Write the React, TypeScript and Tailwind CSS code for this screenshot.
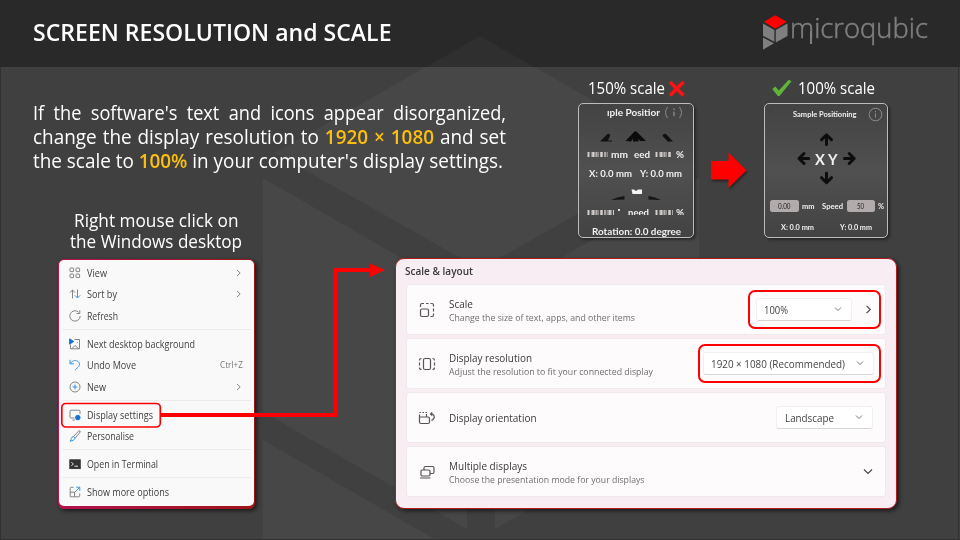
import React, { useLayoutEffect, useRef } from "react";

type FitProps = { w: number; className?: string; children: React.ReactNode };

/** One line of text set to a fixed measure: the glyphs are condensed or widened to fill it. */
function Fit({ w, className = "", children }: FitProps) {
  const ref = useRef<HTMLSpanElement>(null);
  useLayoutEffect(() => {
    const el = ref.current;
    if (el && el.offsetWidth) {
      el.style.transform = "none";
      const natural = el.getBoundingClientRect().width;
      el.style.transform = `scaleX(${w / natural})`;
    }
  }, [w]);
  return (
    <span className={`block shrink-0 whitespace-nowrap ${className}`} style={{ width: w }}>
      <span ref={ref} className="inline-block origin-left align-top">
        {children}
      </span>
    </span>
  );
}

function Backdrop() {
  return (
    <svg className="absolute inset-0" width="960" height="540" viewBox="0 0 960 540">
      <rect width="960" height="540" fill="#404040" />
      <g fill="#474747">
        <path d="M480 36 685 153 480 269 275 153Z" />
        <path d="M263 178 467 296V529L263 412Z" />
        <path d="M699 178 495 296V529L699 412Z" />
        <path d="M263 440 436 540H263Z" />
      </g>
      <rect width="960" height="67" fill="#292929" />
      <path d="M480 36 534 67H426Z" fill="#2f2f2f" />
      <path d="M.5 67V540M958.5 67V540M0 539.5H960" stroke="#303030" fill="none" />
    </svg>
  );
}

function Logo() {
  return (
    <div className="flex h-[40px] w-[165px]">
      <svg width="27" height="38" viewBox="0 0 27 38">
        <path d="M12.3 .8 24.3 7.6 12.5 14.6 1 7.6Z" fill="#ff0000" />
        <path d="M0 9.2 11.6 16V28L0 21.8Z M13 16 25 9.2V22L13 28.8Z M0 23.5 11.2 29.5 0 36Z" fill="#7f7f7f" />
      </svg>
      <div className="relative ml-[.5px] mt-[1px]">
        <Fit w={138} className="text-[28px] font-light leading-[24px] text-[#7f7f7f] [-webkit-text-stroke:0.5px_#7f7f7f]">
          microqubic
        </Fit>
        <span className="absolute left-[20px] top-[16px] h-[13px] w-[2px] bg-[#7f7f7f]" />
      </div>
    </div>
  );
}

function Garble({ w }: { w: number }) {
  return (
    <svg width={w} height="5" viewBox={`0 0 ${w} 5`} className="shrink-0">
      <path d={`M0 2.5H${w}`} stroke="#8d8989" strokeWidth="5" strokeDasharray="3 1 1.5 1" />
      <path d={`M1 2.5H${w}`} stroke="#d5d0d0" strokeWidth="5" strokeDasharray="1 3.2 2 2.1" />
    </svg>
  );
}

const label = "font-['Lato','Open_Sans',sans-serif] font-bold text-[#f0f0f0]";
const panel =
  "flex flex-col overflow-hidden rounded-[5px] border border-[#bcbcbc] bg-linear-to-b from-[#434343] via-[#505050] to-[#434343] shadow-[2px_2px_3px_rgba(0,0,0,0.4)]";

function BrokenPanel() {
  return (
    <div className={`${panel} ${label} h-[134.5px] w-[116px] text-[10px]`}>
      <div className="flex h-4 shrink-0 pl-[28px] leading-4">
        <Fit w={53}>ıple Positior</Fit>
        <svg className="ml-[4px] mt-[2px]" width="20" height="13" viewBox="0 0 20 13" fill="none" stroke="#8c8c8c">
          <path d="M3.500 1Q-.5 6.5 3.500 12M15.500 1Q19.500 6.500 15.500 12" />
          <path d="M10 5.500V10M10 2.500V4" strokeWidth="1.300" />
        </svg>
      </div>
      <svg className="shrink-0" width="114" height="28" viewBox="0 0 114 28">
        <path d="M21 21.500 28.500 14Q31 13 31 16L29 20.500H33V21.500Z M94 21.500 87 14Q84 13 83.500 16L88 20.500V21.500Z" fill="#111" />
        <path d="M46.500 21 55 12Q56.500 10.500 58 12L67 21H61L59.500 18.500V21.500H54V18.500L52 21.500Z" fill="#0c0c0c" />
      </svg>
      <div className="flex h-3 shrink-0 items-center pl-[8px]">
        <Garble w={21} />
        <span className="ml-[3px] h-[7px] overflow-hidden"><Fit w={17} className="mt-[-3px] leading-[12px]">mm</Fit></span>
        <span className="ml-[6px] h-[7px] overflow-hidden"><Fit w={16} className="mt-[-3px] leading-[12px]">eed</Fit></span>
        <span className="ml-[5px]"><Garble w={17} /></span>
        <span className="ml-[4px] h-[7px] overflow-hidden"><Fit w={8} className="mt-[-3px] leading-[12px]">%</Fit></span>
      </div>
      <div className="flex h-[26px] shrink-0 gap-[8px] pl-[10px] leading-[26px]">
        <Fit w={43}>X: 0.0 mm</Fit>
        <Fit w={42}>Y: 0.0 mm</Fit>
      </div>
      <svg className="shrink-0" width="114" height="18" viewBox="0 0 114 18">
        <path d="M52.500 3.500H55L57 5 59 3.500H63V8H53.500Z" fill="#f4f4f4" />
        <path d="M32 14Q38 11 45.500 10V13.500ZM82 14Q76 11 69.500 10V13.500Z" fill="#141414" />
      </svg>
      <div className="flex h-[14px] shrink-0 items-center pl-[8px] pt-[2px]">
        <Garble w={27} />
        <span className="ml-[4px] mt-[3px] h-[2px] w-[2px] self-start bg-[#ddd]" />
        <span className="ml-[8px] h-[6px] overflow-hidden"><Fit w={21} className="mt-[-3px] leading-[12px]">need</Fit></span>
        <span className="ml-[6px]"><Garble w={18} /></span>
        <span className="ml-[3px] h-[6px] overflow-hidden"><Fit w={8} className="mt-[-3px] leading-[12px]">%</Fit></span>
      </div>
      <div className="shrink-0 pl-[12.5px] leading-[26px]">
        <Fit w={89}>Rotation: 0.0 degree</Fit>
      </div>
    </div>
  );
}

function FixedPanel() {
  const arrow = "M0 5V-4.500M-5 .3 0-4.700 5 .3";
  const field = "flex h-[12px] shrink-0 items-center justify-center rounded-[2.5px] bg-[#b1abab] text-[#222] font-normal";
  return (
    <div className={`${panel} ${label} h-[134.5px] w-[124px] text-[7.5px]`}>
      <div className="flex h-[22px] shrink-0 pl-[27.5px] leading-[21px]">
        <Fit w={63.500}>Sample Positioning</Fit>
        <svg className="ml-[11.500px] mt-[3px]" width="15" height="15" viewBox="0 0 15 15" fill="none" stroke="#8c8c8c">
          <circle cx="7.500" cy="7.500" r="6.300" />
          <path d="M7.500 6.500V10.500M7.500 4V5.300" />
        </svg>
      </div>
      <div className="relative flex h-[67px] shrink-0 items-center pl-[50px]">
        <svg className="absolute inset-0" width="122" height="67" viewBox="0 0 122 67" fill="none" stroke="#0d0d0d" strokeWidth="3" strokeLinecap="round" strokeLinejoin="round">
          <path d={arrow} transform="translate(61.500 13.500)" />
          <path d={arrow} transform="translate(38.700 32.500) rotate(-90)" />
          <path d={arrow} transform="translate(84.500 32.500) rotate(90)" />
          <path d={arrow} transform="translate(61.500 52) rotate(180)" />
        </svg>
        <Fit w={22.500} className="mt-[-1px] text-[16px] leading-[22px]">X Y</Fit>
      </div>
      <div className="mt-[6.500px] flex h-[13px] shrink-0 items-center pl-[5px] leading-[13px]">
        <span className={`${field} w-[29px]`}><Fit w={12.500}>0.00</Fit></span>
        <Fit w={12.500} className="ml-[3px]">mm</Fit>
        <Fit w={21} className="ml-[7px]">Speed</Fit>
        <span className={`${field} ml-[4px] w-[28px]`}><Fit w={7}>50</Fit></span>
        <Fit w={6} className="ml-[3px]">%</Fit>
      </div>
      <div className="flex shrink-0 gap-[26px] pl-[16px] pt-[7px] leading-[15px]">
        <Fit w={33}>X: 0.0 mm</Fit>
        <Fit w={32}>Y: 0.0 mm</Fit>
      </div>
    </div>
  );
}

const blue = "#2b8be0";

const menuIcons: Record<string, React.ReactNode> = {
  view: (
    <g>
      <rect x="1" y="1" width="3.600" height="3.600" rx=".6" />
      <rect x="7" y="1" width="3.600" height="3.600" rx=".6" />
      <rect x="1" y="7" width="3.600" height="3.600" rx=".6" />
      <rect x="7" y="7" width="3.600" height="3.600" rx=".6" />
    </g>
  ),
  sort: (
    <>
      <path d="M3.500 10.500V2M.8 4.700 3.500 2 6.200 4.700" />
      <path d="M8.500 1.500V10M5.800 7.300 8.500 10 11.200 7.300" stroke={blue} />
    </>
  ),
  refresh: <path d="M11.200 6A5.200 5.200 0 1 1 9.500 2.100M10.800 .3V3.500H7.500" />,
  next: (
    <>
      <path d="M5.500 1.500H10.500V10.800H1.500V6.500M3 10.500 6 7.500 9.500 10.500M8 4.500h.8" />
      <path d="M.6 .8 4.800 3.500 .6 6.200Z" fill="#1272d0" stroke="#1272d0" />
    </>
  ),
  undo: <path d="M1 .8V4.800H5M1.200 4.600C3 1.800 6 .8 8.600 2.200 11 3.600 11 6.300 9.300 8L6 11.200" stroke={blue} />,
  new: (
    <>
      <circle cx="6" cy="6" r="5" />
      <path d="M6 3.500V8.500M3.500 6H8.500" stroke={blue} />
    </>
  ),
  display: (
    <>
      <path d="M5.500 9H2Q1 9 1 8V2.200Q1 1.200 2 1.200H10Q11 1.200 11 2.200V5M3.500 11H6" />
      <circle cx="8.800" cy="8.600" r="2.300" fill="#1272d0" stroke="#1272d0" />
    </>
  ),
  brush: (
    <>
      <path d="M4.500 6.500 9.800 .9Q11.500 .4 11.200 2L6.200 8" />
      <path d="M4.500 6.500 6.200 8Q5.500 11 1 11.200 2.400 9.800 2.200 8.600 2.600 6.800 4.500 6.500Z" stroke={blue} />
    </>
  ),
  terminal: (
    <>
      <rect x=".8" y="1.800" width="10.500" height="8.800" fill="#333" stroke="#333" />
      <path d="M2.500 4.200 4.300 6 2.500 7.800M5.500 8.200H9" stroke="#fff" />
    </>
  ),
  more: (
    <>
      <path d="M4.500 1.300H2.200Q1.200 1.300 1.200 2.300V10.800H9.700Q10.700 10.800 10.700 9.800V7.500M1.200 6.200H5.500V10.800" />
      <path d="M6 6 10.500 1.500M7.200 1.200H10.800V4.800" stroke={blue} />
    </>
  ),
};

type Item = { icon: string; text: string; w: number; sub?: boolean; key2?: string };
const groups: Item[][] = [
  [
    { icon: "view", text: "View", w: 20, sub: true },
    { icon: "sort", text: "Sort by", w: 30, sub: true },
    { icon: "refresh", text: "Refresh", w: 31 },
  ],
  [
    { icon: "next", text: "Next desktop background", w: 108 },
    { icon: "undo", text: "Undo Move", w: 49, key2: "Ctrl+Z" },
    { icon: "new", text: "New", w: 19, sub: true },
  ],
  [
    { icon: "display", text: "Display settings", w: 66 },
    { icon: "brush", text: "Personalise", w: 47 },
  ],
  [{ icon: "terminal", text: "Open in Terminal", w: 71 }],
  [{ icon: "more", text: "Show more options", w: 82 }],
];

function ContextMenu() {
  return (
    <div className="h-[249.5px] w-[197px] shrink-0 rounded-[6px] bg-linear-to-r from-[#b3124e] to-[#a01414] pb-[2.500px] pl-[1px] pr-[1.500px] pt-[1px] shadow-[2px_2px_4px_rgba(0,0,0,0.6)]">
      <div className="h-full rounded-[5px] bg-[#f9f9f9] pt-[2px] text-[10px] text-[#404040]">
        {groups.map((g, i) => (
          <div key={i}>
            {i > 0 && <div className="mx-[3px] my-[2.560px] h-px bg-[#ececec]" />}
            {g.map((it) => (
              <div key={it.text} className="flex h-[21.600px] items-center pl-[9.500px] pr-[10.500px] leading-[20px]">
                <svg width="12" height="12" viewBox="0 0 12 12" fill="none" stroke="#777" strokeWidth=".9">
                  {menuIcons[it.icon]}
                </svg>
                <Fit w={it.w} className="ml-[6.500px]">{it.text}</Fit>
                <span className="grow" />
                {it.sub && (
                  <svg width="6" height="8" viewBox="0 0 6 8" fill="none" stroke="#888" className="mr-[1px]">
                    <path d="M1 1 4.200 4 1 7" />
                  </svg>
                )}
                {it.key2 && <Fit w={23} className="text-[8.800px] text-[#777]">{it.key2}</Fit>}
              </div>
            ))}
          </div>
        ))}
      </div>
    </div>
  );
}

function Chevron() {
  return (
    <svg className="shrink-0" width="8" height="6" viewBox="0 0 8 6" fill="none" stroke="#777">
      <path d="M1 1.500 4 4.500 7 1.500" />
    </svg>
  );
}

function Select({ text, w, className }: { text: string; w: number; className: string }) {
  return (
    <div className={`flex h-[23.500px] shrink-0 items-center justify-between rounded-[3px] border border-[#f0f0f0] border-b-[#d6d6d6] bg-white pl-[7.500px] pr-[9px] text-[10.500px] leading-[20px] text-[#444] ${className}`}>
      <Fit w={w} className="mt-[1px]">{text}</Fit>
      <Chevron />
    </div>
  );
}

type SettingProps = { icon: React.ReactNode; title: string; tw: number; sub?: string; sw?: number; children: React.ReactNode };
function Setting({ icon, title, tw, sub, sw = 0, children }: SettingProps) {
  return (
    <div className="flex h-[50.500px] items-center rounded-[3px] border border-[#f1e8ec] bg-[#fdfbfc] pl-[11.500px]">
      <svg className="mt-[1px]" width="18" height="18" viewBox="0 0 18 18" fill="none" stroke="#555" strokeWidth="1.200">
        {icon}
      </svg>
      <div className="ml-[13px] grow pt-[2px]">
        <Fit w={tw} className="text-[10.700px] leading-[14px] text-[#3a3a3a]">{title}</Fit>
        {sub && <Fit w={sw} className="text-[9.200px] leading-[13px] text-[#6f6f6f]">{sub}</Fit>}
      </div>
      {children}
    </div>
  );
}

const ring = "flex h-[38.500px] shrink-0 items-center rounded-[7px] border-2 border-[#f00]";

function SettingsPanel() {
  return (
    <div className="h-[250.500px] w-[501.500px] shrink-0 rounded-[9px] border border-[#b01c1c] bg-[#f8edf2] px-[9.500px] pt-[3px] shadow-[2px_2px_4px_rgba(0,0,0,0.6)]">
      <Fit w={68} className="-ml-[.5px] text-[10.500px] font-semibold leading-[18px] text-[#3a3a3a]">Scale &amp; layout</Fit>
      <div className="mt-[4px] flex flex-col gap-[3.500px]">
        <Setting
          title="Scale" tw={24} sub="Change the size of text, apps, and other items" sw={186}
          icon={<><rect x="2.500" y="8" width="8" height="7.500" rx="1.500" /><path d="M2.500 6V4Q2.500 2.500 4 2.500H6M8 2.500H10.500M12.500 2.500H14Q15.500 2.500 15.500 4V5.500M15.500 7.500V10.500M15.500 12.500V14Q15.500 15.500 14 15.500H12.500" /></>}
        >
          <div className={`${ring} mr-[4.500px] w-[133px] pl-[6px]`}>
            <Select text="100%" w={24} className="w-[96px]" />
            <svg className="ml-[13px]" width="7" height="9" viewBox="0 0 7 9" fill="none" stroke="#444" strokeWidth="1.100">
              <path d="M1.500 .8 5.300 4.500 1.500 8.200" />
            </svg>
          </div>
        </Setting>
        <Setting
          title="Display resolution" tw={83} sub="Adjust the resolution to fit your connected display" sw={204}
          icon={<><rect x="5.500" y="3.500" width="7" height="11" rx="1.500" /><path d="M3.500 3.500Q1.500 3.500 1.500 5.500M1.500 7.500V10.500M1.500 12.500Q1.500 14.500 3.500 14.500M14.500 3.500Q16.500 3.500 16.500 5.500M16.500 7.500V10.500M16.500 12.500Q16.500 14.500 14.500 14.500" /></>}
        >
          <div className={`${ring} mr-[4.500px] w-[182.500px] pl-[2.500px]`}>
            <Select text="1920 × 1080 (Recommended)" w={134} className="w-[171px]" />
          </div>
        </Setting>
        <Setting
          title="Display orientation" tw={87.500}
          icon={<><path d="M1.500 8H10Q11.500 8 11.500 9.500V13Q11.500 14.500 10 14.500H3Q1.500 14.500 1.500 13ZM1.500 8V5.500M1.500 3.500H3M4.500 3.500H6M7.500 3.500H9M8.500 5V8" /><path d="M12.500 5H14.500Q17.500 7.500 15.500 10L13.500 11.500M14.200 3.300 12.500 5 14.200 6.700" /></>}
        >
          <Select text="Landscape" w={49} className="mr-[12px] w-[97px]" />
        </Setting>
        <Setting
          title="Multiple displays" tw={78} sub="Choose the presentation mode for your displays" sw={195.500}
          icon={<><rect x="3" y="7" width="9" height="6" rx="1.200" /><path d="M6 7V5Q6 3.500 7.500 3.500H14.500Q16 3.500 16 5V9Q16 10.500 14.500 10.500H12M2 15H12.500" /></>}
        >
          <svg className="mr-[12.500px] mt-[1px]" width="10" height="7" viewBox="0 0 10 7" fill="none" stroke="#444" strokeWidth="1.100">
            <path d="M1 1.500 5 5.500 9 1.500" />
          </svg>
        </Setting>
      </div>
    </div>
  );
}

export default function App() {
  return (
    <div className="relative h-[540px] w-[960px] overflow-hidden font-['Open_Sans','Noto_Sans',sans-serif] text-white">
      <Backdrop />
      <div className="relative flex h-full flex-col">
        <header className="flex h-[67px] shrink-0 items-center justify-between pl-[33px] pr-[32px]">
          <Fit w={358.500} className="mt-[-3px] text-[24px] font-semibold leading-[30px]">SCREEN RESOLUTION and SCALE</Fit>
          <Logo />
        </header>

        <section className="flex h-[191px] shrink-0">
          <div className="w-[578px] pl-[33px] pt-[34px]">
            <div className="text-[19.500px] leading-[24.200px]">
              <Fit w={473} className="[word-spacing:5px]">If the software's text and icons appear disorganized,</Fit>
              <Fit w={473} className="[word-spacing:1px]">
                change the display resolution to <b className="font-semibold text-[#fdbf0f]">1920 × 1080</b> and set
              </Fit>
              <Fit w={470}>
                the scale to <b className="font-semibold text-[#fdbf0f]">100%</b> in your computer's display settings.
              </Fit>
            </div>
            <div className="flex w-[246px] flex-col items-center pt-[36px] text-[17.800px] leading-[21.800px]">
              <Fit w={164.500}>Right mouse click on</Fit>
              <Fit w={172}>the Windows desktop</Fit>
            </div>
          </div>

          <div className="w-[116px] pt-[8px]">
            <div className="mb-[2px] flex h-[26px] items-center pl-[10px]">
              <Fit w={77} className="text-[16px] leading-[22px]">150% scale</Fit>
              <svg className="ml-[3px] mt-[2px]" width="18" height="18" viewBox="0 0 18 18" stroke="#f11" strokeWidth="3.600">
                <path d="M2 2 15.500 15.500M15.500 2 2 15.500" />
              </svg>
            </div>
            <BrokenPanel />
          </div>

          <svg className="mx-[16px] mt-[85px] drop-shadow-[1px_2px_1px_rgba(0,0,0,0.4)]" width="38" height="38" viewBox="0 0 38 38">
            <path d="M1 9H18.500V.5L36.500 18.200 18.500 36V27.500H1Z" fill="#f00" />
          </svg>

          <div className="w-[124px] pt-[8px]">
            <div className="mb-[2px] flex h-[26px] items-center pl-[8px]">
              <svg width="20" height="18" viewBox="0 0 20 18">
                <path d="M.3 10 3.300 7.500 6.800 11.500 16.800 .8 19.500 2.200 7.500 17H5.800Z" fill="#5fb53a" />
              </svg>
              <Fit w={77} className="ml-[6px] text-[16px] leading-[22px]">100% scale</Fit>
            </div>
            <FixedPanel />
          </div>
        </section>

        <section className="flex pl-[58px]">
          <div className="pt-[1px]">
            <ContextMenu />
          </div>
          <div className="ml-[140px]">
            <SettingsPanel />
          </div>
        </section>
      </div>

      {/* highlight on "Display settings" and the connector to the settings panel */}
      <svg className="absolute left-[60px] top-[258px]" width="330" height="175" viewBox="0 0 330 175" fill="none">
        <rect x="1.800" y="145.500" width="98.500" height="23.500" rx="4" stroke="#f00" strokeWidth="1.700" />
        <path d="M101 157H275.500V12H312" stroke="#f00" strokeWidth="4.200" />
        <path d="M310 5.500 325 12 310 19Z" fill="#f00" />
      </svg>
    </div>
  );
}
